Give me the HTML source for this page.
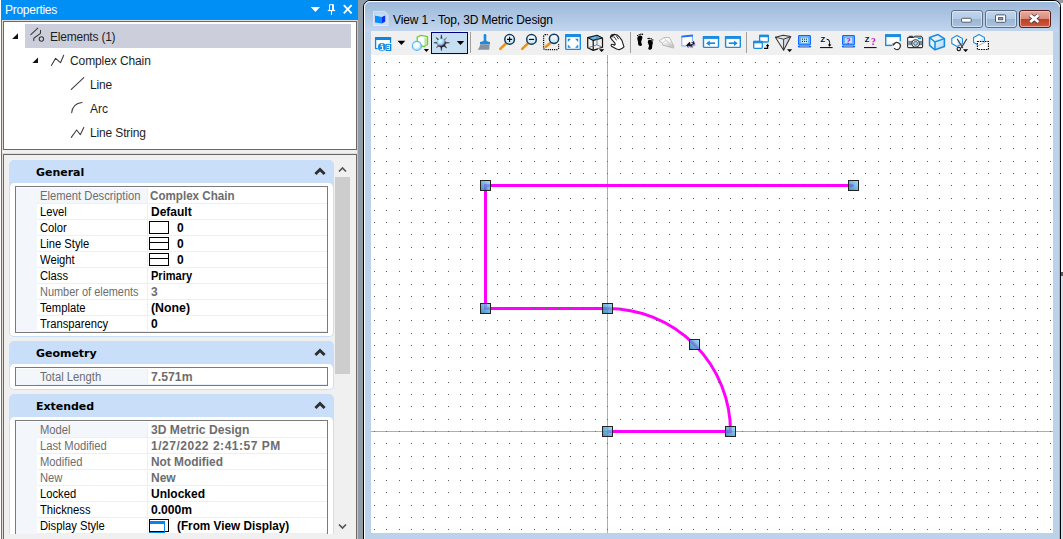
<!DOCTYPE html>
<html>
<head>
<meta charset="utf-8">
<title>Properties - View 1</title>
<style>
html,body{margin:0;padding:0;}
body{width:1063px;height:539px;overflow:hidden;background:#929ca7;position:relative;font-family:"Liberation Sans",sans-serif;}
.abs{position:absolute;}
/* ---------- Properties panel ---------- */
#panel{position:absolute;left:0;top:0;width:358px;height:539px;background:#f0f0f0;overflow:hidden;}
#ptitle{position:absolute;left:1px;top:0;width:357px;height:20px;background:#0090f5;color:#fff;font-size:12px;line-height:16px;}
#ptitle span{position:absolute;left:4px;top:2px;letter-spacing:-0.27px;}
#pleft{position:absolute;left:1px;top:20px;width:1px;height:519px;background:#0090f5;}
#pwhite{position:absolute;left:0;top:0;width:1px;height:539px;background:#fff;}
#tree{position:absolute;left:2px;top:20px;width:355px;height:130px;background:#fff;border-left:1px solid #e3ddd6;border-top:1px solid #e3ddd6;box-sizing:border-box;}
#treein{position:absolute;left:0;top:0;right:0;bottom:0;border:1px solid #696969;}
.trow{position:absolute;font-size:12px;line-height:16px;color:#1e1e1e;white-space:nowrap;}
#grid{position:absolute;left:2px;top:153px;width:355px;height:400px;box-sizing:border-box;border-left:1px solid #e3ddd6;border-top:1px solid #e3ddd6;}
#gridin{position:absolute;left:0;top:0;right:0;bottom:0;border:1px solid #696969;background:#f0f0f0;}
#gcontent{position:absolute;left:0;top:155px;width:335px;height:379px;overflow:hidden;}
#gcontent>div{margin-top:-155px;}
.shead{position:absolute;left:9px;width:325px;height:28px;background:#c9def9;border-radius:5px 5px 0 0;}
.shead b{position:absolute;left:27px;top:6px;font-family:"DejaVu Sans","Liberation Sans",sans-serif;font-size:11px;line-height:14px;color:#000;font-weight:bold;letter-spacing:-0.03px;}
.shead .chev{position:absolute;left:304.5px;top:6.5px;}
.sbody{position:absolute;left:9px;width:325px;box-sizing:border-box;border:1px solid #c9def9;border-top:none;background:#fff;border-radius:5px;}
.pbox{position:absolute;left:15px;width:313px;box-sizing:border-box;border:1px solid #7a7a7a;background:#fff;}
.prow{position:absolute;left:0;width:311px;height:16px;font-size:12px;line-height:16px;white-space:nowrap;}
.sx{display:inline-block;transform-origin:0 50%;}
.lx{transform:scaleX(0.935);}
.prow .ind{position:absolute;left:0;top:0;width:21px;height:16px;background:#f3f6fb;}
.prow .lab{position:absolute;left:21px;top:0;width:111px;height:16px;padding-left:3px;box-sizing:border-box;border-bottom:1px solid #eaf0f9;border-right:1px solid #eaf0f9;color:#000;}
.prow .val{position:absolute;left:132px;top:0;width:179px;height:16px;padding-left:3px;box-sizing:border-box;border-bottom:1px solid #eaf0f9;font-weight:bold;color:#000;}
.prow.ro .lab{color:#6d6d6d;}
.prow.first .lab{background:#f3f6fb;}
.prow.ro .val{color:#6d6d6d;}
.sw{position:absolute;left:1px;top:1px;width:18px;height:11px;border:1px solid #000;background:#fff;}
.sw i{position:absolute;left:0;top:4px;width:18px;height:1px;background:#000;}
.sv{position:absolute;left:29px;top:0;}
.sv2{position:absolute;left:29px;top:0;}
.dsi{position:absolute;left:1px;top:1px;width:18px;height:11px;border:1px solid #000;background:#fff;}
.dsi:before{content:"";position:absolute;left:0;top:1px;width:15px;height:3px;background:#0b84e8;}
.dsi:after{content:"";position:absolute;left:-1px;top:4px;width:15px;height:8px;border-right:1px solid #0b84e8;border-bottom:1px solid #0b84e8;}
#pbottom{position:absolute;left:4px;top:534px;width:352px;height:5px;background:#f0f0f0;}
#sbar{position:absolute;left:334px;top:155px;width:22px;height:379px;background:#f0f0f0;}
#sthumb{position:absolute;left:1px;top:22px;width:15px;height:197px;background:#cdcdcd;}
/* ---------- View window ---------- */
#win{position:absolute;left:363px;top:0;width:698px;height:560px;box-sizing:border-box;border:1px solid #000;border-radius:7px 7px 0 0;background:#bbd2ea;}
#winin{position:absolute;left:0;top:0;right:0;bottom:0;border:1px solid #fff;border-radius:6px 6px 0 0;background:linear-gradient(#9cb8d9 0px,#c2d6ee 30px,#bbd2ea 31px);}
#wtitle{position:absolute;left:393px;top:12px;font-size:12px;line-height:16px;color:#000;white-space:nowrap;letter-spacing:-0.15px;}
#tb{position:absolute;left:371px;top:31px;width:682px;height:24px;background:#f0f0f0;}
#canvas{position:absolute;left:371px;top:55px;width:682px;height:478px;background:#fff;overflow:hidden;}
</style>
</head>
<body>
<!-- Properties panel -->
<div id="panel">
  <div id="pwhite"></div>
  <div class="abs" style="left:357px;top:20px;width:1px;height:519px;background:#c4c7cb;"></div>
  <div id="ptitle"><span>Properties</span></div>
  <div id="pleft"></div>
  <div id="tree"><div id="treein"></div></div>
  <div class="abs" style="left:25px;top:24px;width:326px;height:24px;background:#cccedb;"></div>
  <div class="trow" style="left:50px;top:29px;letter-spacing:-0.22px;">Elements (1)</div>
  <div class="trow" style="left:70px;top:53px;letter-spacing:-0.1px;">Complex Chain</div>
  <div class="trow" style="left:90px;top:77px;letter-spacing:-0.15px;">Line</div>
  <div class="trow" style="left:90px;top:101px;">Arc</div>
  <div class="trow" style="left:90px;top:125px;letter-spacing:-0.15px;">Line String</div>
  <svg class="abs" style="left:0;top:0;" width="358" height="150" viewBox="0 0 358 150">
<path d="M310.8 7h9.2l-4.6 5z" fill="#fff"/>
<path d="M329.5 10V4.7h4V10" fill="none" stroke="#fff" stroke-width="1"/><path d="M333 4.7V10" stroke="#fff" stroke-width="1.8"/><path d="M327.8 10.5h7.4" stroke="#fff" stroke-width="1.2"/><path d="M331.5 11v3.8" stroke="#fff" stroke-width="1.1"/>
<path d="M343.8 5.2l7.8 8.2M351.6 5.2l-7.8 8.2" stroke="#fff" stroke-width="1.9"/>
<path d="M18 33.2V39H12.2Z" fill="#111"/>
<path d="M38 57.4V63H32.4Z" fill="#111"/>
<g fill="none" stroke="#3a3a3a" stroke-width="1.05" stroke-linecap="round" stroke-linejoin="round">
<path d="M30.8 34.7L37.8 28.2"/>
<path d="M33.8 40.6V38.2L40.5 33.4V30.2"/>
<circle cx="41.4" cy="39" r="2.2"/>
<path d="M51.4 65.4L55.6 58.3L60.5 62.7L63.7 55.3"/>
<path d="M71.3 89.4L83.8 77.6"/>
<path d="M71.7 112.8Q72.5 103.4 82 102.4"/>
<path d="M71.3 137.4L76.7 130L80.3 134.7L83.8 127.4"/>
</g>
</svg>
<div id="grid"><div id="gridin"></div></div>
<div id="gcontent">
<!--GRID-->
<div class="shead" style="top:160px;"><b>General</b><svg class="chev" width="12" height="9" viewBox="0 0 12 9"><path d="M6 0.4L11.6 6L9.6 8L6 4.4L2.4 8L0.4 6Z" fill="#2e2e2e"/></svg></div>
<div class="sbody" style="top:183px;height:154px;"></div>
<div class="pbox" style="top:186px;height:147px;">
<div class="prow ro first" style="top:1px;"><div class="ind"></div><div class="lab"><span class="sx lx">Element Description</span></div><div class="val"><span class="sx" style="margin-left:-1px;transform:scaleX(0.968)">Complex Chain</span></div></div>
<div class="prow" style="top:17px;"><div class="ind"></div><div class="lab"><span class="sx lx">Level</span></div><div class="val">Default</div></div>
<div class="prow" style="top:33px;"><div class="ind"></div><div class="lab"><span class="sx lx">Color</span></div><div class="val"><span class="sw"></span><span class="sv">0</span></div></div>
<div class="prow" style="top:49px;"><div class="ind"></div><div class="lab"><span class="sx lx">Line Style</span></div><div class="val"><span class="sw"><i></i></span><span class="sv">0</span></div></div>
<div class="prow" style="top:65px;"><div class="ind"></div><div class="lab"><span class="sx lx">Weight</span></div><div class="val"><span class="sw"><i></i></span><span class="sv">0</span></div></div>
<div class="prow" style="top:81px;"><div class="ind"></div><div class="lab"><span class="sx lx">Class</span></div><div class="val"><span class="sx" style="transform:scaleX(0.92)">Primary</span></div></div>
<div class="prow ro" style="top:97px;"><div class="ind"></div><div class="lab"><span class="sx lx" style="transform:scaleX(0.912)">Number of elements</span></div><div class="val">3</div></div>
<div class="prow" style="top:113px;"><div class="ind"></div><div class="lab"><span class="sx lx">Template</span></div><div class="val"><span class="sx" style="transform:scaleX(1.026)">(None)</span></div></div>
<div class="prow" style="top:129px;"><div class="ind"></div><div class="lab"><span class="sx lx">Transparency</span></div><div class="val">0</div></div>
</div>
<div class="shead" style="top:341px;"><b>Geometry</b><svg class="chev" width="12" height="9" viewBox="0 0 12 9"><path d="M6 0.4L11.6 6L9.6 8L6 4.4L2.4 8L0.4 6Z" fill="#2e2e2e"/></svg></div>
<div class="sbody" style="top:364px;height:26px;"></div>
<div class="pbox" style="top:367px;height:19px;">
<div class="prow ro first" style="top:1px;"><div class="ind"></div><div class="lab"><span class="sx lx">Total Length</span></div><div class="val"><span class="sx" style="transform:scaleX(1.02)">7.571m</span></div></div>
</div>
<div class="shead" style="top:394px;"><b>Extended</b><svg class="chev" width="12" height="9" viewBox="0 0 12 9"><path d="M6 0.4L11.6 6L9.6 8L6 4.4L2.4 8L0.4 6Z" fill="#2e2e2e"/></svg></div>
<div class="sbody" style="top:417px;height:138px;"></div>
<div class="pbox" style="top:420px;height:131px;">
<div class="prow ro first" style="top:1px;"><div class="ind"></div><div class="lab"><span class="sx lx">Model</span></div><div class="val"><span class="sx" style="transform:scaleX(1.01)">3D Metric Design</span></div></div>
<div class="prow ro" style="top:17px;"><div class="ind"></div><div class="lab"><span class="sx lx">Last Modified</span></div><div class="val"><span style="letter-spacing:0.52px">1/27/2022 2:41:57 PM</span></div></div>
<div class="prow ro" style="top:33px;"><div class="ind"></div><div class="lab"><span class="sx lx">Modified</span></div><div class="val"><span class="sx" style="transform:scaleX(0.99)">Not Modified</span></div></div>
<div class="prow ro" style="top:49px;"><div class="ind"></div><div class="lab"><span class="sx lx">New</span></div><div class="val">New</div></div>
<div class="prow" style="top:65px;"><div class="ind"></div><div class="lab"><span class="sx lx">Locked</span></div><div class="val">Unlocked</div></div>
<div class="prow" style="top:81px;"><div class="ind"></div><div class="lab"><span class="sx lx">Thickness</span></div><div class="val"><span class="sx" style="transform:scaleX(1.01)">0.000m</span></div></div>
<div class="prow" style="top:97px;"><div class="ind"></div><div class="lab"><span class="sx lx">Display Style</span></div><div class="val"><span class="dsi"></span><span class="sv2 sx" style="transform:scaleX(0.98)">(From View Display)</span></div></div>
<div class="prow" style="top:113px;"><div class="ind"></div><div class="lab"><span class="sx lx">Display Priority</span></div><div class="val">0</div></div>
</div>
<!--/GRID-->
</div>
<div id="pbottom"></div>
<div id="sbar"><div id="sthumb"></div><svg class="abs" style="left:4px;top:11px" width="9" height="7" viewBox="0 0 9 7"><path d="M1 5.5L4.5 2L8 5.5" fill="none" stroke="#555" stroke-width="1.7"/></svg><svg class="abs" style="left:4px;top:368px" width="9" height="7" viewBox="0 0 9 7"><path d="M1 1.5L4.5 5L8 1.5" fill="none" stroke="#555" stroke-width="1.7"/></svg></div>
</div>
<!-- View window -->
<div id="win"><div id="winin"></div></div>
<svg class="abs" style="left:363px;top:0;" width="700" height="31" viewBox="363 0 700 31">
<defs>
<linearGradient id="bb" x1="0" y1="0" x2="0" y2="1"><stop offset="0" stop-color="#c3d6ec"/><stop offset="0.48" stop-color="#b4cbe6"/><stop offset="0.52" stop-color="#9cb7d6"/><stop offset="1" stop-color="#a9c3e0"/></linearGradient>
<linearGradient id="br" x1="0" y1="0" x2="0" y2="1"><stop offset="0" stop-color="#e9aea2"/><stop offset="0.48" stop-color="#d98c7c"/><stop offset="0.52" stop-color="#bf3f26"/><stop offset="1" stop-color="#cf5b3c"/></linearGradient>
<linearGradient id="icb" x1="0" y1="0" x2="1" y2="0"><stop offset="0" stop-color="#1e9bff"/><stop offset="0.62" stop-color="#0a84f0"/><stop offset="0.64" stop-color="#0a4fd0"/><stop offset="1" stop-color="#0a4fd0"/></linearGradient>
</defs>
<!-- window icon -->
<path d="M373.5 11.5H385L388 14.5V25.5H373.5Z" fill="#fff" fill-opacity="0.3" stroke="#fff" stroke-opacity="0.55" stroke-width="0.8"/>
<path d="M375 15.6L381.8 16.8V23.4L375 22.4Z" fill="#0a8cff"/>
<path d="M381.8 16.8L385.2 15.4V21.8L381.8 23.4Z" fill="#0a32f5"/>
<path d="M375 15.6L379 13.3L385.2 15.4L381.8 16.8Z" fill="#bde1ff"/>
<!-- min -->
<rect x="951.5" y="10.5" width="31" height="17" rx="2.5" fill="url(#bb)" stroke="#5c6f86" stroke-width="1"/>
<rect x="952.5" y="11.5" width="29" height="15" rx="1.8" fill="none" stroke="#dbe7f5" stroke-opacity="0.8" stroke-width="1"/>
<rect x="961.6" y="18.3" width="9.6" height="3.9" rx="0.8" fill="#fff" stroke="#444c5a" stroke-width="0.9"/>
<!-- max -->
<rect x="985.5" y="10.5" width="31" height="17" rx="2.5" fill="url(#bb)" stroke="#5c6f86" stroke-width="1"/>
<rect x="986.5" y="11.5" width="29" height="15" rx="1.8" fill="none" stroke="#dbe7f5" stroke-opacity="0.8" stroke-width="1"/>
<rect x="995.5" y="14.9" width="10.2" height="7.4" rx="1" fill="#fff" stroke="#444c5a" stroke-width="0.9"/>
<rect x="998.4" y="17.6" width="4.4" height="2.2" fill="#7f9fc8" stroke="#444c5a" stroke-width="0.8"/>
<!-- close -->
<rect x="1019.5" y="10.5" width="31" height="17" rx="2.5" fill="url(#br)" stroke="#5a1d1d" stroke-width="1"/>
<rect x="1020.5" y="11.5" width="29" height="15" rx="1.8" fill="none" stroke="#f3c9c0" stroke-opacity="0.75" stroke-width="1"/>
<path d="M1030.2 15.2L1038.4 22M1038.4 15.2L1030.2 22" stroke="#4a3a40" stroke-width="4.6" stroke-linecap="butt"/>
<path d="M1030.2 15.2L1038.4 22M1038.4 15.2L1030.2 22" stroke="#fff" stroke-width="2.9" stroke-linecap="butt"/>
</svg>
<div class="abs" style="left:1059px;top:7px;width:1px;height:532px;background:#62d0fb;"></div>
<div class="abs" style="left:1061px;top:3px;width:2px;height:270px;background:#f6f8fb;"></div>
<div class="abs" style="left:1061px;top:276px;width:2px;height:263px;background:linear-gradient(90deg,#e4eaf3,#cfd9e8);"></div>
<div class="abs" style="left:1061px;top:272px;width:2px;height:4px;background:#5a5a5a;"></div>
<div id="wtitle">View 1 - Top, 3D Metric Design</div>
<div id="tb">
<!--TB-->
<svg id="tbsvg" width="682" height="24" viewBox="371 31 682 24" style="position:absolute;left:0;top:0;">
<defs>
<radialGradient id="sph" cx="0.42" cy="0.4" r="0.65"><stop offset="0" stop-color="#ffffff"/><stop offset="0.45" stop-color="#f2faff"/><stop offset="1" stop-color="#8fd0ff"/></radialGradient>
<radialGradient id="sun" cx="0.38" cy="0.3" r="0.78"><stop offset="0" stop-color="#d8ffff"/><stop offset="0.36" stop-color="#a6e6f6"/><stop offset="0.56" stop-color="#a0acec"/><stop offset="0.76" stop-color="#33333c"/><stop offset="1" stop-color="#0c0c0c"/></radialGradient>
<linearGradient id="lens" x1="0" y1="0" x2="0" y2="1"><stop offset="0" stop-color="#ffffff"/><stop offset="1" stop-color="#bfe3fb"/></linearGradient>
<linearGradient id="cone" x1="0" y1="0" x2="1" y2="0"><stop offset="0" stop-color="#ffffff"/><stop offset="1" stop-color="#c6cacf"/></linearGradient>
<linearGradient id="cubeb" x1="0" y1="0" x2="1" y2="1"><stop offset="0" stop-color="#ffffff"/><stop offset="1" stop-color="#a8dafc"/></linearGradient>
</defs>
<!-- 1 view attributes -->
<g>
<rect x="376" y="39" width="14.4" height="9.6" fill="#fff"/>
<path d="M375.6 48.4V38.2H390.5V43" fill="none" stroke="#0b86e0" stroke-width="1.3"/>
<path d="M375.6 48.6H377.2" fill="none" stroke="#0b86e0" stroke-width="1.3" stroke-linecap="round"/>
<rect x="375" y="36.9" width="16.1" height="3" rx="0.6" fill="#0b86e0"/>
<rect x="386.2" y="44.4" width="4.4" height="6.1" fill="#fff" stroke="#0b86e0" stroke-width="1"/>
<path d="M390.6 44V51" stroke="#0b86e0" stroke-width="1.3"/>
<path d="M386.9 46.4h2.4M386.9 48.5h2.4" stroke="#0b86e0" stroke-width="1"/>
<circle cx="381.9" cy="47.1" r="4.05" fill="#1690f0"/>
<path d="M380.6 46.3h2v3M380.2 49.7h3.6" stroke="#fff" stroke-width="1.1" fill="none"/><ellipse cx="381.9" cy="44.5" rx="1" ry="0.7" fill="#fff"/>
</g>
<path d="M397.5 40.7h7.8l-3.9 4.3z" fill="#000"/>
<!-- 2 display style -->
<g>
<path d="M417.2 37.2L420.9 35.3L427.5 36.7V44.4L424.4 46.5L417.2 45.2Z" fill="#fff" stroke="#6dcf3f" stroke-width="1.3" stroke-linejoin="round"/>
<path d="M425.2 38.4L427 37.3V44.1L425.2 45.4Z" fill="#bfeaa6"/>
<path d="M425 38.2V46" fill="none" stroke="#8fdc68" stroke-width="0.8"/>
<circle cx="416.9" cy="45.9" r="4.5" fill="url(#sph)" stroke="#56b8ff" stroke-width="1.2"/>
<path d="M423.8 49.1h5.2l-2.6 2.8z" fill="#000"/>
</g>
<!-- 3 sun (selected) -->
<rect x="431.5" y="32.5" width="36" height="21" fill="#c7dff3" stroke="#000080" stroke-width="1"/>
<g><path d="M442.15 39.20L440.65 39.20L441.40 34.80Z" fill="#2b2626" stroke="#2b2626" stroke-width="0.5"/><path d="M440.65 46.40L442.15 46.40L441.40 50.70Z" fill="#2b2626" stroke="#2b2626" stroke-width="0.5"/><path d="M437.80 42.05L437.80 43.55L433.80 42.80Z" fill="#3a3434" stroke="#3a3434" stroke-width="0.5"/><path d="M445.00 43.55L445.00 42.05L449.60 42.80Z" fill="#4a4040" stroke="#4a4040" stroke-width="0.5"/><path d="M439.38 39.72L438.32 40.78L436.03 37.43Z" fill="#3a3434" stroke="#3a3434" stroke-width="0.5"/><path d="M444.48 40.78L443.42 39.72L446.63 37.57Z" fill="#8a7a70" stroke="#8a7a70" stroke-width="0.5"/><path d="M438.32 44.82L439.38 45.88L436.31 47.89Z" fill="#6a5e5a" stroke="#6a5e5a" stroke-width="0.5"/><path d="M443.42 45.88L444.48 44.82L446.63 48.03Z" fill="#2b2626" stroke="#2b2626" stroke-width="0.5"/></g>
<circle cx="441.4" cy="42.8" r="4.4" fill="url(#sun)"/>
<path d="M456.8 40.9h7.4l-3.7 4.1z" fill="#000"/>
<!-- sep -->
<path d="M470.5 32V53M630.5 32V53M746.5 32V53" stroke="#a0a0a0" stroke-width="1"/>
<!-- brush -->
<g>
<path d="M483.6 35.2Q483.6 34.1 485 34.1Q486.4 34.1 486.4 35.2L486.2 40.4Q487.4 41.6 490 41.9V44.3H480V41.9Q482.6 41.6 483.8 40.4Z" fill="#1b8be0"/>
<path d="M480.2 44.3H489.6L489.3 49.7H477.8Q479.8 47.5 480.2 44.3Z" fill="#8792a0"/>
</g>
<!-- zoom in -->
<g>
<path d="M505.8 43.6L500.3 48.9" stroke="#f0910f" stroke-width="2.6" stroke-linecap="round"/>
<circle cx="509.6" cy="39.4" r="4.8" fill="url(#lens)" stroke="#0d3b5a" stroke-width="1.5"/>
<path d="M507 39.4h5.2M509.6 36.8v5.2" stroke="#000" stroke-width="1.1"/>
</g>
<!-- zoom out -->
<g>
<path d="M527.7 43.6L522.2 48.9" stroke="#f0910f" stroke-width="2.6" stroke-linecap="round"/>
<circle cx="531.5" cy="39.4" r="4.8" fill="url(#lens)" stroke="#0d3b5a" stroke-width="1.5"/>
<path d="M528.9 39.4h5.2" stroke="#000" stroke-width="1.1"/>
</g>
<!-- window area -->
<g>
<rect x="543.6" y="34.6" width="15" height="15" rx="1.5" fill="none" stroke="#000" stroke-width="1.25" stroke-dasharray="1.15 1.0"/>
<rect x="548" y="33.5" width="12" height="10.5" fill="#f0f0f0"/>
<path d="M550.4 43L545.8 46.8" stroke="#f0910f" stroke-width="2.6" stroke-linecap="round"/>
<circle cx="554" cy="38.8" r="4.6" fill="url(#lens)" stroke="#0d3b5a" stroke-width="1.5"/>
</g>
<!-- fit view -->
<g>
<rect x="565.7" y="34.8" width="14.6" height="14.6" rx="0.8" fill="#fff" stroke="#1b8be0" stroke-width="1.4"/>
<rect x="565" y="34.1" width="16" height="3" fill="#1b8be0"/>
<path d="M567.8 38.7h3.2l-3.2 3.2zM578.2 38.7h-3.2l3.2 3.2zM567.8 47.7h3.2l-3.2-3.2zM578.2 47.7h-3.2l3.2-3.2z" fill="#1b8be0"/>
</g>
<!-- rotate view cube -->
<g>
<path d="M587.7 37.6L597 35.2L602.5 38L593.2 40.4Z" fill="#5dbaf6" stroke="#111" stroke-width="1.1" stroke-linejoin="round"/>
<path d="M587.7 37.6V47.8L593.2 50.4V40.4M602.5 38V47.4L593.2 50.4" fill="none" stroke="#111" stroke-width="1.2" stroke-linejoin="round"/>
<path d="M597 35.6V44.8L587.7 47.8M597 44.8L602.5 47.4" fill="none" stroke="#5a6470" stroke-width="0.8"/>
<rect x="598" y="48.5" width="7" height="4" fill="#f0f0f0"/>
<path d="M599 49.2h5.2l-2.6 2.8z" fill="#000"/>
</g>
<!-- hand -->
<g>
<path d="M610.3 37.5L611.4 35L614.2 34.3L617.4 35.1L619.6 37.2L621.9 40.4L623.1 44.1L624 46.9L622.3 48.2L619.1 49.8L616.6 49L611.8 46.6Q610.6 45.4 611.4 44.4Q612.4 43.8 614.2 45.2L615.3 44.4L614.8 42.8L612.5 40.4Z" fill="#fff" stroke="#1a1a1a" stroke-width="1.1" stroke-linejoin="round"/>
<path d="M613.8 36.3L616.6 40.4M616.2 35.7L618.7 39.2M611.4 35.6L613 37.6" fill="none" stroke="#1a1a1a" stroke-width="0.9"/>
<path d="M610.6 37L612.6 35.2L614.4 34.8" fill="none" stroke="#1a1a1a" stroke-width="1.6"/>
</g>
<!-- feet -->
<g fill="#000">
<path d="M637.4 37.6Q638 35.6 640.6 35.6Q642.8 35.8 642.4 38Q641.6 40 641.2 41.6Q641.2 43.2 642 44.4Q641.8 46.2 640 46Q638 45.6 638 43.4Q638.2 41.6 637.6 40.2Q637 38.8 637.4 37.6Z"/>
<circle cx="637.6" cy="35.6" r="0.7"/><circle cx="639.2" cy="34.7" r="0.7"/><circle cx="640.8" cy="34.3" r="0.7"/><circle cx="642.4" cy="34.3" r="0.8"/>
<path d="M652.6 41.6Q652 39.6 649.6 39.8Q647.4 40.2 647.8 42.4Q648.6 44.2 649 45.6Q649 47.2 648.2 48.2Q648.4 50 650.2 49.8Q652.2 49.4 652.2 47.2Q652 45.6 652.6 44.2Q653.2 42.8 652.6 41.6Z"/>
<circle cx="652.8" cy="40" r="0.7"/><circle cx="651.4" cy="38.9" r="0.7"/><circle cx="649.8" cy="38.4" r="0.7"/><circle cx="648.2" cy="38.5" r="0.8"/>
</g>
<!-- paper plane -->
<g>
<defs><linearGradient id="pl" x1="0" y1="0" x2="0.3" y2="1"><stop offset="0" stop-color="#ffffff"/><stop offset="0.55" stop-color="#f4f4f4"/><stop offset="1" stop-color="#c2c2c2"/></linearGradient></defs>
<path d="M659 40.9L663.9 37.6L669.3 37.4L673.9 46.3L673.5 48L671.4 47.6L662.7 45.1L662.3 43Z" fill="url(#pl)" stroke="#b6b6b6" stroke-width="0.9" stroke-linejoin="round"/>
<path d="M662.3 43L666 40.4L673.5 47.6M663.9 37.8L673 46.6" fill="none" stroke="#c9c9c9" stroke-width="0.7"/>
</g>
<!-- navigate view -->
<g>
<path d="M681.8 46V36.6L692.4 35.4V41" fill="#fff" stroke="#7aa7ff" stroke-width="1"/>
<path d="M681.4 37.6V35.8L692.9 34.6V36.6Z" fill="#1f6bff"/>
<path d="M681.8 46H686" stroke="#7aa7ff" stroke-width="1"/>
<path d="M686.4 46.2L690 42.4L690.6 43.8L694.4 41.6L694.8 44.6L691.8 45.6L692.8 47.4L688.8 46.4L687.6 47.4Z" fill="#9a96d6" transform="translate(0.6 0.9)"/>
<path d="M686 45.6L689.6 41.8L690.4 43.2L694 41L694.6 44L691.6 45L692.6 46.8L688.6 45.8L687.4 46.8Z" fill="#111"/>
<path d="M689.8 43.8L692.6 42.6L692.8 43.6L690.6 44.6Z" fill="#fff"/>
</g>
<!-- view previous / next -->
<g>
<rect x="703.5" y="36.7" width="15" height="10.7" rx="0.8" fill="#fff" stroke="#1b8be0" stroke-width="1.4"/>
<rect x="702.8" y="36" width="16.4" height="2.9" fill="#1b8be0"/>
<path d="M709 43.2H715" stroke="#1b8be0" stroke-width="1.7"/><path d="M706 43.2L709.8 40.4V46Z" fill="#1b8be0"/>
<rect x="725.6" y="36.7" width="14.7" height="10.7" rx="0.8" fill="#fff" stroke="#1b8be0" stroke-width="1.4"/>
<rect x="724.9" y="36" width="16.1" height="2.9" fill="#1b8be0"/>
<path d="M728.8 43.2H734.8" stroke="#1b8be0" stroke-width="1.7"/><path d="M737.8 43.2L734 40.4V46Z" fill="#1b8be0"/>
</g>
<!-- copy view -->
<g>
<rect x="759.6" y="35.4" width="8.8" height="6.6" rx="0.8" fill="#fff" stroke="#1b8be0" stroke-width="1.3"/>
<rect x="759" y="34.8" width="10" height="2.4" fill="#1b8be0"/>
<rect x="753.7" y="41.5" width="8.6" height="6.8" rx="0.8" fill="#fff" stroke="#1b8be0" stroke-width="1.3"/>
<rect x="753.1" y="40.9" width="9.8" height="2.4" fill="#1b8be0"/>
<path d="M764 48.4H767.6V45.6" fill="none" stroke="#000" stroke-width="1.2"/><path d="M765.8 46.2L767.6 43.8L769.4 46.2Z" fill="#000"/>
</g>
<!-- perspective -->
<g>
<path d="M775.4 37.2L783.2 35.2L790.8 36.6L783.6 50.2Z" fill="url(#cone)" stroke="#363636" stroke-width="1.05" stroke-linejoin="round"/>
<path d="M775.4 37.2L783.6 39.2L790.8 36.6M783.6 39.2V50.2" fill="none" stroke="#363636" stroke-width="0.95"/>
<rect x="786" y="48.6" width="7" height="4" fill="#f0f0f0"/>
<path d="M787 49.2h5.2l-2.6 2.8z" fill="#000"/>
</g>
<!-- display depth monitor -->
<g>
<rect x="798.7" y="35.7" width="11.6" height="9.2" rx="0.8" fill="#8fdcff" stroke="#0b63ff" stroke-width="1.3"/>
<rect x="800.3" y="37.2" width="8.4" height="6.2" fill="#b5eaff" stroke="#4d8bff" stroke-width="0.6"/>
<path d="M802 39.2h1M804 39.2h1M806 39.2h1M802 41.4h1M804 41.4h1M806 41.4h1" stroke="#222" stroke-width="1"/>
<path d="M798.6 46.6H810.4" stroke="#0b63ff" stroke-width="1.6" stroke-linecap="round"/><path d="M800 46.3H809" stroke="#d8c9a8" stroke-width="0.6"/>
</g>
<!-- set active depth -->
<g>
<text x="820.6" y="41.6" font-family="Liberation Sans, sans-serif" font-size="7.6" font-weight="bold" fill="#111">Z</text>
<path d="M826.6 39.2Q829.6 39 829.6 42.4V45" fill="none" stroke="#000" stroke-width="1"/>
<path d="M827.8 44.4H831.4L829.6 46.8Z" fill="#000"/>
<path d="M820 47.6H832.6" stroke="#000" stroke-width="1"/>
</g>
<!-- show display depth -->
<g>
<rect x="842.7" y="35.7" width="11.6" height="9.2" rx="0.8" fill="#8fdcff" stroke="#0b63ff" stroke-width="1.3"/>
<rect x="844.3" y="37.2" width="8.4" height="6.2" fill="#b5eaff" stroke="#4d8bff" stroke-width="0.6"/>
<text x="846.2" y="43.8" font-family="Liberation Serif, serif" font-size="9" font-weight="bold" fill="#c400c4">?</text>
<path d="M842.6 46.6H854.4" stroke="#0b63ff" stroke-width="1.6" stroke-linecap="round"/><path d="M844 46.3H853" stroke="#d8c9a8" stroke-width="0.6"/>
</g>
<!-- show active depth -->
<g>
<text x="864.7" y="41.6" font-family="Liberation Sans, sans-serif" font-size="7.6" font-weight="bold" fill="#111">Z</text>
<text x="871" y="45.4" font-family="Liberation Serif, serif" font-size="9.5" font-weight="bold" fill="#c400c4">?</text>
<path d="M864 47.6H876.6" stroke="#000" stroke-width="1"/>
</g>
<!-- view rotate -->
<g>
<path d="M885.7 45.4V35.5H900.3V41.2" fill="#fff" stroke="#1b8be0" stroke-width="1.4"/>
<path d="M885 45.4H893" stroke="#1b8be0" stroke-width="1.4"/>
<rect x="885" y="34.1" width="16" height="3" fill="#1b8be0"/>
<circle cx="896.9" cy="46" r="4.6" fill="#f0f0f0"/>
<circle cx="896.9" cy="46" r="3.4" fill="#fff" stroke="#333" stroke-width="1.3" stroke-dasharray="17 4.4" transform="rotate(-150 896.9 46)"/>
<path d="M892.4 43.4L895.2 43.4L893.2 46Z" fill="#333"/>
</g>
<!-- camera -->
<g>
<rect x="907.6" y="37.4" width="15" height="10.2" rx="1" fill="#fff" stroke="#2e3338" stroke-width="1.1"/>
<rect x="908.2" y="40.8" width="13.8" height="4.4" fill="#7d8893"/>
<path d="M909.4 37.2V36.2H912.6V37.2" fill="#2e3338" stroke="#2e3338" stroke-width="0.8"/>
<path d="M913.4 37.4L914.6 36.2H921.4L922.2 37.4" fill="#fff" stroke="#2e3338" stroke-width="1"/>
<path d="M917.8 38.6H921.2" stroke="#1b8be0" stroke-width="1.2"/>
<circle cx="915.6" cy="43.4" r="3.7" fill="#fff" stroke="#2e3338" stroke-width="1.1"/>
<circle cx="915.6" cy="43.4" r="2" fill="#9ad7fb" stroke="#2e3338" stroke-width="0.7"/>
</g>
<!-- clip volume cube -->
<g>
<path d="M929.6 37.6L938 34.6L944.4 38.6V46.4L935 49.8L929.6 45.4Z" fill="url(#cubeb)" stroke="#1b8be0" stroke-width="1.6" stroke-linejoin="round"/>
<path d="M929.6 37.6L935 42L944.4 38.6M935 42V49.8" fill="none" stroke="#1b8be0" stroke-width="1.5"/>
<path d="M930.8 39.6L934 42.4V47.8L930.8 45Z" fill="#e4f4ff"/>
</g>
<!-- clip mask -->
<g>
<path d="M951.8 38.4L957 35.6L962.4 38.4V43.6L957 46.4L951.8 43.6Z" fill="#fff" stroke="#1b8be0" stroke-width="1.1" stroke-linejoin="round"/>
<path d="M957.4 41L961.6 38.8V43.2L957.4 45.6Z" fill="#cfeaff"/>
<path d="M957.4 39.2L962.6 47.6M966.6 39.2L961.4 47.6" stroke="#3c4248" stroke-width="1.2" stroke-linecap="round"/>
<circle cx="958.8" cy="49" r="1.7" fill="#f0f0f0" stroke="#111" stroke-width="1.1"/>
<path d="M963 49.2h5.2l-2.6 2.8z" fill="#000"/>
</g>
<!-- clip box -->
<g>
<path d="M973.6 37.4L979 34.6L984.4 37.4V42.6L979 45.2L973.6 42.6Z" fill="#fff" stroke="#1b8be0" stroke-width="1.1" stroke-linejoin="round"/>
<path d="M979.4 40L983.6 37.8V42.2L979.4 44.4Z" fill="#cfeaff"/>
<rect x="977.4" y="41.5" width="11" height="8" fill="#fff" stroke="#000" stroke-width="1.1" stroke-dasharray="1.5 1"/>
<path d="M978.2 45.8L985 42.2" stroke="#9a9a9a" stroke-width="0.8"/>
</g>
</svg>
<!--/TB-->
</div>
<div id="canvas">
<svg id="cv" width="682" height="478" viewBox="0 0 682 478" style="position:absolute;left:0;top:0;">
<defs><linearGradient id="hg" x1="0" y1="1" x2="1" y2="0"><stop offset="0" stop-color="#1670b0"/><stop offset="1" stop-color="#8fd8fa"/></linearGradient></defs>
<path id="dots" d="M3 7.5h1m11 0h1m12 0h1m11 0h1m11 0h1m11 0h1m12 0h1m11 0h1m11 0h1m12 0h1m11 0h1m11 0h1m11 0h1m12 0h1m11 0h1m11 0h1m11 0h1m12 0h1m11 0h1m11 0h1m12 0h1m11 0h1m11 0h1m11 0h1m12 0h1m11 0h1m11 0h1m12 0h1m11 0h1m11 0h1m11 0h1m12 0h1m11 0h1m11 0h1m12 0h1m11 0h1m11 0h1m11 0h1m12 0h1m11 0h1m11 0h1m12 0h1m11 0h1m11 0h1m11 0h1m12 0h1m11 0h1m11 0h1m12 0h1m11 0h1m11 0h1m11 0h1m12 0h1m11 0h1m11 0h1m12 0h1M3 20.5h1m11 0h1m12 0h1m11 0h1m11 0h1m11 0h1m12 0h1m11 0h1m11 0h1m12 0h1m11 0h1m11 0h1m11 0h1m12 0h1m11 0h1m11 0h1m11 0h1m12 0h1m11 0h1m11 0h1m12 0h1m11 0h1m11 0h1m11 0h1m12 0h1m11 0h1m11 0h1m12 0h1m11 0h1m11 0h1m11 0h1m12 0h1m11 0h1m11 0h1m12 0h1m11 0h1m11 0h1m11 0h1m12 0h1m11 0h1m11 0h1m12 0h1m11 0h1m11 0h1m11 0h1m12 0h1m11 0h1m11 0h1m12 0h1m11 0h1m11 0h1m11 0h1m12 0h1m11 0h1m11 0h1m12 0h1M3 32.5h1m11 0h1m12 0h1m11 0h1m11 0h1m11 0h1m12 0h1m11 0h1m11 0h1m12 0h1m11 0h1m11 0h1m11 0h1m12 0h1m11 0h1m11 0h1m11 0h1m12 0h1m11 0h1m11 0h1m12 0h1m11 0h1m11 0h1m11 0h1m12 0h1m11 0h1m11 0h1m12 0h1m11 0h1m11 0h1m11 0h1m12 0h1m11 0h1m11 0h1m12 0h1m11 0h1m11 0h1m11 0h1m12 0h1m11 0h1m11 0h1m12 0h1m11 0h1m11 0h1m11 0h1m12 0h1m11 0h1m11 0h1m12 0h1m11 0h1m11 0h1m11 0h1m12 0h1m11 0h1m11 0h1m12 0h1M3 44.5h1m11 0h1m12 0h1m11 0h1m11 0h1m11 0h1m12 0h1m11 0h1m11 0h1m12 0h1m11 0h1m11 0h1m11 0h1m12 0h1m11 0h1m11 0h1m11 0h1m12 0h1m11 0h1m11 0h1m12 0h1m11 0h1m11 0h1m11 0h1m12 0h1m11 0h1m11 0h1m12 0h1m11 0h1m11 0h1m11 0h1m12 0h1m11 0h1m11 0h1m12 0h1m11 0h1m11 0h1m11 0h1m12 0h1m11 0h1m11 0h1m12 0h1m11 0h1m11 0h1m11 0h1m12 0h1m11 0h1m11 0h1m12 0h1m11 0h1m11 0h1m11 0h1m12 0h1m11 0h1m11 0h1m12 0h1M3 57.5h1m11 0h1m12 0h1m11 0h1m11 0h1m11 0h1m12 0h1m11 0h1m11 0h1m12 0h1m11 0h1m11 0h1m11 0h1m12 0h1m11 0h1m11 0h1m11 0h1m12 0h1m11 0h1m11 0h1m12 0h1m11 0h1m11 0h1m11 0h1m12 0h1m11 0h1m11 0h1m12 0h1m11 0h1m11 0h1m11 0h1m12 0h1m11 0h1m11 0h1m12 0h1m11 0h1m11 0h1m11 0h1m12 0h1m11 0h1m11 0h1m12 0h1m11 0h1m11 0h1m11 0h1m12 0h1m11 0h1m11 0h1m12 0h1m11 0h1m11 0h1m11 0h1m12 0h1m11 0h1m11 0h1m12 0h1M3 69.5h1m11 0h1m12 0h1m11 0h1m11 0h1m11 0h1m12 0h1m11 0h1m11 0h1m12 0h1m11 0h1m11 0h1m11 0h1m12 0h1m11 0h1m11 0h1m11 0h1m12 0h1m11 0h1m11 0h1m12 0h1m11 0h1m11 0h1m11 0h1m12 0h1m11 0h1m11 0h1m12 0h1m11 0h1m11 0h1m11 0h1m12 0h1m11 0h1m11 0h1m12 0h1m11 0h1m11 0h1m11 0h1m12 0h1m11 0h1m11 0h1m12 0h1m11 0h1m11 0h1m11 0h1m12 0h1m11 0h1m11 0h1m12 0h1m11 0h1m11 0h1m11 0h1m12 0h1m11 0h1m11 0h1m12 0h1M3 81.5h1m11 0h1m12 0h1m11 0h1m11 0h1m11 0h1m12 0h1m11 0h1m11 0h1m12 0h1m11 0h1m11 0h1m11 0h1m12 0h1m11 0h1m11 0h1m11 0h1m12 0h1m11 0h1m11 0h1m12 0h1m11 0h1m11 0h1m11 0h1m12 0h1m11 0h1m11 0h1m12 0h1m11 0h1m11 0h1m11 0h1m12 0h1m11 0h1m11 0h1m12 0h1m11 0h1m11 0h1m11 0h1m12 0h1m11 0h1m11 0h1m12 0h1m11 0h1m11 0h1m11 0h1m12 0h1m11 0h1m11 0h1m12 0h1m11 0h1m11 0h1m11 0h1m12 0h1m11 0h1m11 0h1m12 0h1M3 93.5h1m11 0h1m12 0h1m11 0h1m11 0h1m11 0h1m12 0h1m11 0h1m11 0h1m12 0h1m11 0h1m11 0h1m11 0h1m12 0h1m11 0h1m11 0h1m11 0h1m12 0h1m11 0h1m11 0h1m12 0h1m11 0h1m11 0h1m11 0h1m12 0h1m11 0h1m11 0h1m12 0h1m11 0h1m11 0h1m11 0h1m12 0h1m11 0h1m11 0h1m12 0h1m11 0h1m11 0h1m11 0h1m12 0h1m11 0h1m11 0h1m12 0h1m11 0h1m11 0h1m11 0h1m12 0h1m11 0h1m11 0h1m12 0h1m11 0h1m11 0h1m11 0h1m12 0h1m11 0h1m11 0h1m12 0h1M3 106.5h1m11 0h1m12 0h1m11 0h1m11 0h1m11 0h1m12 0h1m11 0h1m11 0h1m12 0h1m11 0h1m11 0h1m11 0h1m12 0h1m11 0h1m11 0h1m11 0h1m12 0h1m11 0h1m11 0h1m12 0h1m11 0h1m11 0h1m11 0h1m12 0h1m11 0h1m11 0h1m12 0h1m11 0h1m11 0h1m11 0h1m12 0h1m11 0h1m11 0h1m12 0h1m11 0h1m11 0h1m11 0h1m12 0h1m11 0h1m11 0h1m12 0h1m11 0h1m11 0h1m11 0h1m12 0h1m11 0h1m11 0h1m12 0h1m11 0h1m11 0h1m11 0h1m12 0h1m11 0h1m11 0h1m12 0h1M3 118.5h1m11 0h1m12 0h1m11 0h1m11 0h1m11 0h1m12 0h1m11 0h1m11 0h1m12 0h1m11 0h1m11 0h1m11 0h1m12 0h1m11 0h1m11 0h1m11 0h1m12 0h1m11 0h1m11 0h1m12 0h1m11 0h1m11 0h1m11 0h1m12 0h1m11 0h1m11 0h1m12 0h1m11 0h1m11 0h1m11 0h1m12 0h1m11 0h1m11 0h1m12 0h1m11 0h1m11 0h1m11 0h1m12 0h1m11 0h1m11 0h1m12 0h1m11 0h1m11 0h1m11 0h1m12 0h1m11 0h1m11 0h1m12 0h1m11 0h1m11 0h1m11 0h1m12 0h1m11 0h1m11 0h1m12 0h1M3 130.5h1m11 0h1m12 0h1m11 0h1m11 0h1m11 0h1m12 0h1m11 0h1m11 0h1m12 0h1m11 0h1m11 0h1m11 0h1m12 0h1m11 0h1m11 0h1m11 0h1m12 0h1m11 0h1m11 0h1m12 0h1m11 0h1m11 0h1m11 0h1m12 0h1m11 0h1m11 0h1m12 0h1m11 0h1m11 0h1m11 0h1m12 0h1m11 0h1m11 0h1m12 0h1m11 0h1m11 0h1m11 0h1m12 0h1m11 0h1m11 0h1m12 0h1m11 0h1m11 0h1m11 0h1m12 0h1m11 0h1m11 0h1m12 0h1m11 0h1m11 0h1m11 0h1m12 0h1m11 0h1m11 0h1m12 0h1M3 143.5h1m11 0h1m12 0h1m11 0h1m11 0h1m11 0h1m12 0h1m11 0h1m11 0h1m12 0h1m11 0h1m11 0h1m11 0h1m12 0h1m11 0h1m11 0h1m11 0h1m12 0h1m11 0h1m11 0h1m12 0h1m11 0h1m11 0h1m11 0h1m12 0h1m11 0h1m11 0h1m12 0h1m11 0h1m11 0h1m11 0h1m12 0h1m11 0h1m11 0h1m12 0h1m11 0h1m11 0h1m11 0h1m12 0h1m11 0h1m11 0h1m12 0h1m11 0h1m11 0h1m11 0h1m12 0h1m11 0h1m11 0h1m12 0h1m11 0h1m11 0h1m11 0h1m12 0h1m11 0h1m11 0h1m12 0h1M3 155.5h1m11 0h1m12 0h1m11 0h1m11 0h1m11 0h1m12 0h1m11 0h1m11 0h1m12 0h1m11 0h1m11 0h1m11 0h1m12 0h1m11 0h1m11 0h1m11 0h1m12 0h1m11 0h1m11 0h1m12 0h1m11 0h1m11 0h1m11 0h1m12 0h1m11 0h1m11 0h1m12 0h1m11 0h1m11 0h1m11 0h1m12 0h1m11 0h1m11 0h1m12 0h1m11 0h1m11 0h1m11 0h1m12 0h1m11 0h1m11 0h1m12 0h1m11 0h1m11 0h1m11 0h1m12 0h1m11 0h1m11 0h1m12 0h1m11 0h1m11 0h1m11 0h1m12 0h1m11 0h1m11 0h1m12 0h1M3 167.5h1m11 0h1m12 0h1m11 0h1m11 0h1m11 0h1m12 0h1m11 0h1m11 0h1m12 0h1m11 0h1m11 0h1m11 0h1m12 0h1m11 0h1m11 0h1m11 0h1m12 0h1m11 0h1m11 0h1m12 0h1m11 0h1m11 0h1m11 0h1m12 0h1m11 0h1m11 0h1m12 0h1m11 0h1m11 0h1m11 0h1m12 0h1m11 0h1m11 0h1m12 0h1m11 0h1m11 0h1m11 0h1m12 0h1m11 0h1m11 0h1m12 0h1m11 0h1m11 0h1m11 0h1m12 0h1m11 0h1m11 0h1m12 0h1m11 0h1m11 0h1m11 0h1m12 0h1m11 0h1m11 0h1m12 0h1M3 179.5h1m11 0h1m12 0h1m11 0h1m11 0h1m11 0h1m12 0h1m11 0h1m11 0h1m12 0h1m11 0h1m11 0h1m11 0h1m12 0h1m11 0h1m11 0h1m11 0h1m12 0h1m11 0h1m11 0h1m12 0h1m11 0h1m11 0h1m11 0h1m12 0h1m11 0h1m11 0h1m12 0h1m11 0h1m11 0h1m11 0h1m12 0h1m11 0h1m11 0h1m12 0h1m11 0h1m11 0h1m11 0h1m12 0h1m11 0h1m11 0h1m12 0h1m11 0h1m11 0h1m11 0h1m12 0h1m11 0h1m11 0h1m12 0h1m11 0h1m11 0h1m11 0h1m12 0h1m11 0h1m11 0h1m12 0h1M3 192.5h1m11 0h1m12 0h1m11 0h1m11 0h1m11 0h1m12 0h1m11 0h1m11 0h1m12 0h1m11 0h1m11 0h1m11 0h1m12 0h1m11 0h1m11 0h1m11 0h1m12 0h1m11 0h1m11 0h1m12 0h1m11 0h1m11 0h1m11 0h1m12 0h1m11 0h1m11 0h1m12 0h1m11 0h1m11 0h1m11 0h1m12 0h1m11 0h1m11 0h1m12 0h1m11 0h1m11 0h1m11 0h1m12 0h1m11 0h1m11 0h1m12 0h1m11 0h1m11 0h1m11 0h1m12 0h1m11 0h1m11 0h1m12 0h1m11 0h1m11 0h1m11 0h1m12 0h1m11 0h1m11 0h1m12 0h1M3 204.5h1m11 0h1m12 0h1m11 0h1m11 0h1m11 0h1m12 0h1m11 0h1m11 0h1m12 0h1m11 0h1m11 0h1m11 0h1m12 0h1m11 0h1m11 0h1m11 0h1m12 0h1m11 0h1m11 0h1m12 0h1m11 0h1m11 0h1m11 0h1m12 0h1m11 0h1m11 0h1m12 0h1m11 0h1m11 0h1m11 0h1m12 0h1m11 0h1m11 0h1m12 0h1m11 0h1m11 0h1m11 0h1m12 0h1m11 0h1m11 0h1m12 0h1m11 0h1m11 0h1m11 0h1m12 0h1m11 0h1m11 0h1m12 0h1m11 0h1m11 0h1m11 0h1m12 0h1m11 0h1m11 0h1m12 0h1M3 216.5h1m11 0h1m12 0h1m11 0h1m11 0h1m11 0h1m12 0h1m11 0h1m11 0h1m12 0h1m11 0h1m11 0h1m11 0h1m12 0h1m11 0h1m11 0h1m11 0h1m12 0h1m11 0h1m11 0h1m12 0h1m11 0h1m11 0h1m11 0h1m12 0h1m11 0h1m11 0h1m12 0h1m11 0h1m11 0h1m11 0h1m12 0h1m11 0h1m11 0h1m12 0h1m11 0h1m11 0h1m11 0h1m12 0h1m11 0h1m11 0h1m12 0h1m11 0h1m11 0h1m11 0h1m12 0h1m11 0h1m11 0h1m12 0h1m11 0h1m11 0h1m11 0h1m12 0h1m11 0h1m11 0h1m12 0h1M3 229.5h1m11 0h1m12 0h1m11 0h1m11 0h1m11 0h1m12 0h1m11 0h1m11 0h1m12 0h1m11 0h1m11 0h1m11 0h1m12 0h1m11 0h1m11 0h1m11 0h1m12 0h1m11 0h1m11 0h1m12 0h1m11 0h1m11 0h1m11 0h1m12 0h1m11 0h1m11 0h1m12 0h1m11 0h1m11 0h1m11 0h1m12 0h1m11 0h1m11 0h1m12 0h1m11 0h1m11 0h1m11 0h1m12 0h1m11 0h1m11 0h1m12 0h1m11 0h1m11 0h1m11 0h1m12 0h1m11 0h1m11 0h1m12 0h1m11 0h1m11 0h1m11 0h1m12 0h1m11 0h1m11 0h1m12 0h1M3 241.5h1m11 0h1m12 0h1m11 0h1m11 0h1m11 0h1m12 0h1m11 0h1m11 0h1m12 0h1m11 0h1m11 0h1m11 0h1m12 0h1m11 0h1m11 0h1m11 0h1m12 0h1m11 0h1m11 0h1m12 0h1m11 0h1m11 0h1m11 0h1m12 0h1m11 0h1m11 0h1m12 0h1m11 0h1m11 0h1m11 0h1m12 0h1m11 0h1m11 0h1m12 0h1m11 0h1m11 0h1m11 0h1m12 0h1m11 0h1m11 0h1m12 0h1m11 0h1m11 0h1m11 0h1m12 0h1m11 0h1m11 0h1m12 0h1m11 0h1m11 0h1m11 0h1m12 0h1m11 0h1m11 0h1m12 0h1M3 253.5h1m11 0h1m12 0h1m11 0h1m11 0h1m11 0h1m12 0h1m11 0h1m11 0h1m12 0h1m11 0h1m11 0h1m11 0h1m12 0h1m11 0h1m11 0h1m11 0h1m12 0h1m11 0h1m11 0h1m12 0h1m11 0h1m11 0h1m11 0h1m12 0h1m11 0h1m11 0h1m12 0h1m11 0h1m11 0h1m11 0h1m12 0h1m11 0h1m11 0h1m12 0h1m11 0h1m11 0h1m11 0h1m12 0h1m11 0h1m11 0h1m12 0h1m11 0h1m11 0h1m11 0h1m12 0h1m11 0h1m11 0h1m12 0h1m11 0h1m11 0h1m11 0h1m12 0h1m11 0h1m11 0h1m12 0h1M3 265.5h1m11 0h1m12 0h1m11 0h1m11 0h1m11 0h1m12 0h1m11 0h1m11 0h1m12 0h1m11 0h1m11 0h1m11 0h1m12 0h1m11 0h1m11 0h1m11 0h1m12 0h1m11 0h1m11 0h1m12 0h1m11 0h1m11 0h1m11 0h1m12 0h1m11 0h1m11 0h1m12 0h1m11 0h1m11 0h1m11 0h1m12 0h1m11 0h1m11 0h1m12 0h1m11 0h1m11 0h1m11 0h1m12 0h1m11 0h1m11 0h1m12 0h1m11 0h1m11 0h1m11 0h1m12 0h1m11 0h1m11 0h1m12 0h1m11 0h1m11 0h1m11 0h1m12 0h1m11 0h1m11 0h1m12 0h1M3 278.5h1m11 0h1m12 0h1m11 0h1m11 0h1m11 0h1m12 0h1m11 0h1m11 0h1m12 0h1m11 0h1m11 0h1m11 0h1m12 0h1m11 0h1m11 0h1m11 0h1m12 0h1m11 0h1m11 0h1m12 0h1m11 0h1m11 0h1m11 0h1m12 0h1m11 0h1m11 0h1m12 0h1m11 0h1m11 0h1m11 0h1m12 0h1m11 0h1m11 0h1m12 0h1m11 0h1m11 0h1m11 0h1m12 0h1m11 0h1m11 0h1m12 0h1m11 0h1m11 0h1m11 0h1m12 0h1m11 0h1m11 0h1m12 0h1m11 0h1m11 0h1m11 0h1m12 0h1m11 0h1m11 0h1m12 0h1M3 290.5h1m11 0h1m12 0h1m11 0h1m11 0h1m11 0h1m12 0h1m11 0h1m11 0h1m12 0h1m11 0h1m11 0h1m11 0h1m12 0h1m11 0h1m11 0h1m11 0h1m12 0h1m11 0h1m11 0h1m12 0h1m11 0h1m11 0h1m11 0h1m12 0h1m11 0h1m11 0h1m12 0h1m11 0h1m11 0h1m11 0h1m12 0h1m11 0h1m11 0h1m12 0h1m11 0h1m11 0h1m11 0h1m12 0h1m11 0h1m11 0h1m12 0h1m11 0h1m11 0h1m11 0h1m12 0h1m11 0h1m11 0h1m12 0h1m11 0h1m11 0h1m11 0h1m12 0h1m11 0h1m11 0h1m12 0h1M3 302.5h1m11 0h1m12 0h1m11 0h1m11 0h1m11 0h1m12 0h1m11 0h1m11 0h1m12 0h1m11 0h1m11 0h1m11 0h1m12 0h1m11 0h1m11 0h1m11 0h1m12 0h1m11 0h1m11 0h1m12 0h1m11 0h1m11 0h1m11 0h1m12 0h1m11 0h1m11 0h1m12 0h1m11 0h1m11 0h1m11 0h1m12 0h1m11 0h1m11 0h1m12 0h1m11 0h1m11 0h1m11 0h1m12 0h1m11 0h1m11 0h1m12 0h1m11 0h1m11 0h1m11 0h1m12 0h1m11 0h1m11 0h1m12 0h1m11 0h1m11 0h1m11 0h1m12 0h1m11 0h1m11 0h1m12 0h1M3 315.5h1m11 0h1m12 0h1m11 0h1m11 0h1m11 0h1m12 0h1m11 0h1m11 0h1m12 0h1m11 0h1m11 0h1m11 0h1m12 0h1m11 0h1m11 0h1m11 0h1m12 0h1m11 0h1m11 0h1m12 0h1m11 0h1m11 0h1m11 0h1m12 0h1m11 0h1m11 0h1m12 0h1m11 0h1m11 0h1m11 0h1m12 0h1m11 0h1m11 0h1m12 0h1m11 0h1m11 0h1m11 0h1m12 0h1m11 0h1m11 0h1m12 0h1m11 0h1m11 0h1m11 0h1m12 0h1m11 0h1m11 0h1m12 0h1m11 0h1m11 0h1m11 0h1m12 0h1m11 0h1m11 0h1m12 0h1M3 327.5h1m11 0h1m12 0h1m11 0h1m11 0h1m11 0h1m12 0h1m11 0h1m11 0h1m12 0h1m11 0h1m11 0h1m11 0h1m12 0h1m11 0h1m11 0h1m11 0h1m12 0h1m11 0h1m11 0h1m12 0h1m11 0h1m11 0h1m11 0h1m12 0h1m11 0h1m11 0h1m12 0h1m11 0h1m11 0h1m11 0h1m12 0h1m11 0h1m11 0h1m12 0h1m11 0h1m11 0h1m11 0h1m12 0h1m11 0h1m11 0h1m12 0h1m11 0h1m11 0h1m11 0h1m12 0h1m11 0h1m11 0h1m12 0h1m11 0h1m11 0h1m11 0h1m12 0h1m11 0h1m11 0h1m12 0h1M3 339.5h1m11 0h1m12 0h1m11 0h1m11 0h1m11 0h1m12 0h1m11 0h1m11 0h1m12 0h1m11 0h1m11 0h1m11 0h1m12 0h1m11 0h1m11 0h1m11 0h1m12 0h1m11 0h1m11 0h1m12 0h1m11 0h1m11 0h1m11 0h1m12 0h1m11 0h1m11 0h1m12 0h1m11 0h1m11 0h1m11 0h1m12 0h1m11 0h1m11 0h1m12 0h1m11 0h1m11 0h1m11 0h1m12 0h1m11 0h1m11 0h1m12 0h1m11 0h1m11 0h1m11 0h1m12 0h1m11 0h1m11 0h1m12 0h1m11 0h1m11 0h1m11 0h1m12 0h1m11 0h1m11 0h1m12 0h1M3 351.5h1m11 0h1m12 0h1m11 0h1m11 0h1m11 0h1m12 0h1m11 0h1m11 0h1m12 0h1m11 0h1m11 0h1m11 0h1m12 0h1m11 0h1m11 0h1m11 0h1m12 0h1m11 0h1m11 0h1m12 0h1m11 0h1m11 0h1m11 0h1m12 0h1m11 0h1m11 0h1m12 0h1m11 0h1m11 0h1m11 0h1m12 0h1m11 0h1m11 0h1m12 0h1m11 0h1m11 0h1m11 0h1m12 0h1m11 0h1m11 0h1m12 0h1m11 0h1m11 0h1m11 0h1m12 0h1m11 0h1m11 0h1m12 0h1m11 0h1m11 0h1m11 0h1m12 0h1m11 0h1m11 0h1m12 0h1M3 364.5h1m11 0h1m12 0h1m11 0h1m11 0h1m11 0h1m12 0h1m11 0h1m11 0h1m12 0h1m11 0h1m11 0h1m11 0h1m12 0h1m11 0h1m11 0h1m11 0h1m12 0h1m11 0h1m11 0h1m12 0h1m11 0h1m11 0h1m11 0h1m12 0h1m11 0h1m11 0h1m12 0h1m11 0h1m11 0h1m11 0h1m12 0h1m11 0h1m11 0h1m12 0h1m11 0h1m11 0h1m11 0h1m12 0h1m11 0h1m11 0h1m12 0h1m11 0h1m11 0h1m11 0h1m12 0h1m11 0h1m11 0h1m12 0h1m11 0h1m11 0h1m11 0h1m12 0h1m11 0h1m11 0h1m12 0h1M3 376.5h1m11 0h1m12 0h1m11 0h1m11 0h1m11 0h1m12 0h1m11 0h1m11 0h1m12 0h1m11 0h1m11 0h1m11 0h1m12 0h1m11 0h1m11 0h1m11 0h1m12 0h1m11 0h1m11 0h1m12 0h1m11 0h1m11 0h1m11 0h1m12 0h1m11 0h1m11 0h1m12 0h1m11 0h1m11 0h1m11 0h1m12 0h1m11 0h1m11 0h1m12 0h1m11 0h1m11 0h1m11 0h1m12 0h1m11 0h1m11 0h1m12 0h1m11 0h1m11 0h1m11 0h1m12 0h1m11 0h1m11 0h1m12 0h1m11 0h1m11 0h1m11 0h1m12 0h1m11 0h1m11 0h1m12 0h1M3 388.5h1m11 0h1m12 0h1m11 0h1m11 0h1m11 0h1m12 0h1m11 0h1m11 0h1m12 0h1m11 0h1m11 0h1m11 0h1m12 0h1m11 0h1m11 0h1m11 0h1m12 0h1m11 0h1m11 0h1m12 0h1m11 0h1m11 0h1m11 0h1m12 0h1m11 0h1m11 0h1m12 0h1m11 0h1m11 0h1m11 0h1m12 0h1m11 0h1m11 0h1m12 0h1m11 0h1m11 0h1m11 0h1m12 0h1m11 0h1m11 0h1m12 0h1m11 0h1m11 0h1m11 0h1m12 0h1m11 0h1m11 0h1m12 0h1m11 0h1m11 0h1m11 0h1m12 0h1m11 0h1m11 0h1m12 0h1M3 401.5h1m11 0h1m12 0h1m11 0h1m11 0h1m11 0h1m12 0h1m11 0h1m11 0h1m12 0h1m11 0h1m11 0h1m11 0h1m12 0h1m11 0h1m11 0h1m11 0h1m12 0h1m11 0h1m11 0h1m12 0h1m11 0h1m11 0h1m11 0h1m12 0h1m11 0h1m11 0h1m12 0h1m11 0h1m11 0h1m11 0h1m12 0h1m11 0h1m11 0h1m12 0h1m11 0h1m11 0h1m11 0h1m12 0h1m11 0h1m11 0h1m12 0h1m11 0h1m11 0h1m11 0h1m12 0h1m11 0h1m11 0h1m12 0h1m11 0h1m11 0h1m11 0h1m12 0h1m11 0h1m11 0h1m12 0h1M3 413.5h1m11 0h1m12 0h1m11 0h1m11 0h1m11 0h1m12 0h1m11 0h1m11 0h1m12 0h1m11 0h1m11 0h1m11 0h1m12 0h1m11 0h1m11 0h1m11 0h1m12 0h1m11 0h1m11 0h1m12 0h1m11 0h1m11 0h1m11 0h1m12 0h1m11 0h1m11 0h1m12 0h1m11 0h1m11 0h1m11 0h1m12 0h1m11 0h1m11 0h1m12 0h1m11 0h1m11 0h1m11 0h1m12 0h1m11 0h1m11 0h1m12 0h1m11 0h1m11 0h1m11 0h1m12 0h1m11 0h1m11 0h1m12 0h1m11 0h1m11 0h1m11 0h1m12 0h1m11 0h1m11 0h1m12 0h1M3 425.5h1m11 0h1m12 0h1m11 0h1m11 0h1m11 0h1m12 0h1m11 0h1m11 0h1m12 0h1m11 0h1m11 0h1m11 0h1m12 0h1m11 0h1m11 0h1m11 0h1m12 0h1m11 0h1m11 0h1m12 0h1m11 0h1m11 0h1m11 0h1m12 0h1m11 0h1m11 0h1m12 0h1m11 0h1m11 0h1m11 0h1m12 0h1m11 0h1m11 0h1m12 0h1m11 0h1m11 0h1m11 0h1m12 0h1m11 0h1m11 0h1m12 0h1m11 0h1m11 0h1m11 0h1m12 0h1m11 0h1m11 0h1m12 0h1m11 0h1m11 0h1m11 0h1m12 0h1m11 0h1m11 0h1m12 0h1M3 437.5h1m11 0h1m12 0h1m11 0h1m11 0h1m11 0h1m12 0h1m11 0h1m11 0h1m12 0h1m11 0h1m11 0h1m11 0h1m12 0h1m11 0h1m11 0h1m11 0h1m12 0h1m11 0h1m11 0h1m12 0h1m11 0h1m11 0h1m11 0h1m12 0h1m11 0h1m11 0h1m12 0h1m11 0h1m11 0h1m11 0h1m12 0h1m11 0h1m11 0h1m12 0h1m11 0h1m11 0h1m11 0h1m12 0h1m11 0h1m11 0h1m12 0h1m11 0h1m11 0h1m11 0h1m12 0h1m11 0h1m11 0h1m12 0h1m11 0h1m11 0h1m11 0h1m12 0h1m11 0h1m11 0h1m12 0h1M3 450.5h1m11 0h1m12 0h1m11 0h1m11 0h1m11 0h1m12 0h1m11 0h1m11 0h1m12 0h1m11 0h1m11 0h1m11 0h1m12 0h1m11 0h1m11 0h1m11 0h1m12 0h1m11 0h1m11 0h1m12 0h1m11 0h1m11 0h1m11 0h1m12 0h1m11 0h1m11 0h1m12 0h1m11 0h1m11 0h1m11 0h1m12 0h1m11 0h1m11 0h1m12 0h1m11 0h1m11 0h1m11 0h1m12 0h1m11 0h1m11 0h1m12 0h1m11 0h1m11 0h1m11 0h1m12 0h1m11 0h1m11 0h1m12 0h1m11 0h1m11 0h1m11 0h1m12 0h1m11 0h1m11 0h1m12 0h1M3 462.5h1m11 0h1m12 0h1m11 0h1m11 0h1m11 0h1m12 0h1m11 0h1m11 0h1m12 0h1m11 0h1m11 0h1m11 0h1m12 0h1m11 0h1m11 0h1m11 0h1m12 0h1m11 0h1m11 0h1m12 0h1m11 0h1m11 0h1m11 0h1m12 0h1m11 0h1m11 0h1m12 0h1m11 0h1m11 0h1m11 0h1m12 0h1m11 0h1m11 0h1m12 0h1m11 0h1m11 0h1m11 0h1m12 0h1m11 0h1m11 0h1m12 0h1m11 0h1m11 0h1m11 0h1m12 0h1m11 0h1m11 0h1m12 0h1m11 0h1m11 0h1m11 0h1m12 0h1m11 0h1m11 0h1m12 0h1M3 474.5h1m11 0h1m12 0h1m11 0h1m11 0h1m11 0h1m12 0h1m11 0h1m11 0h1m12 0h1m11 0h1m11 0h1m11 0h1m12 0h1m11 0h1m11 0h1m11 0h1m12 0h1m11 0h1m11 0h1m12 0h1m11 0h1m11 0h1m11 0h1m12 0h1m11 0h1m11 0h1m12 0h1m11 0h1m11 0h1m11 0h1m12 0h1m11 0h1m11 0h1m12 0h1m11 0h1m11 0h1m11 0h1m12 0h1m11 0h1m11 0h1m12 0h1m11 0h1m11 0h1m11 0h1m12 0h1m11 0h1m11 0h1m12 0h1m11 0h1m11 0h1m11 0h1m12 0h1m11 0h1m11 0h1m12 0h1" stroke="#5a5a5a" stroke-width="1" fill="none" shape-rendering="crispEdges"/>
<path d="M236.5 0V478 M0 376.5H682" stroke="#adadad" stroke-width="1" fill="none" shape-rendering="crispEdges"/>
<path d="M482.5 130.5L114.5 130.5L114.5 253.5L236.5 253.5A123 123 0 0 1 359.5 376.5L236.5 376.5" stroke="#ff00ff" stroke-width="3" fill="none" stroke-linejoin="miter"/>
<use href="#dots" opacity="0.8"/>
<rect x="477.5" y="125.5" width="10" height="10" fill="url(#hg)" fill-opacity="0.8" stroke="#222" stroke-width="1"/>
<rect x="109.5" y="125.5" width="10" height="10" fill="url(#hg)" fill-opacity="0.8" stroke="#222" stroke-width="1"/>
<rect x="109.5" y="248.5" width="10" height="10" fill="url(#hg)" fill-opacity="0.8" stroke="#222" stroke-width="1"/>
<rect x="231.5" y="248.5" width="10" height="10" fill="url(#hg)" fill-opacity="0.8" stroke="#222" stroke-width="1"/>
<rect x="354.5" y="371.5" width="10" height="10" fill="url(#hg)" fill-opacity="0.8" stroke="#222" stroke-width="1"/>
<rect x="231.5" y="371.5" width="10" height="10" fill="url(#hg)" fill-opacity="0.8" stroke="#222" stroke-width="1"/>
<rect x="318.5" y="284.5" width="10" height="10" fill="url(#hg)" fill-opacity="0.8" stroke="#222" stroke-width="1"/>
</svg>
</div>
</body>
</html>
